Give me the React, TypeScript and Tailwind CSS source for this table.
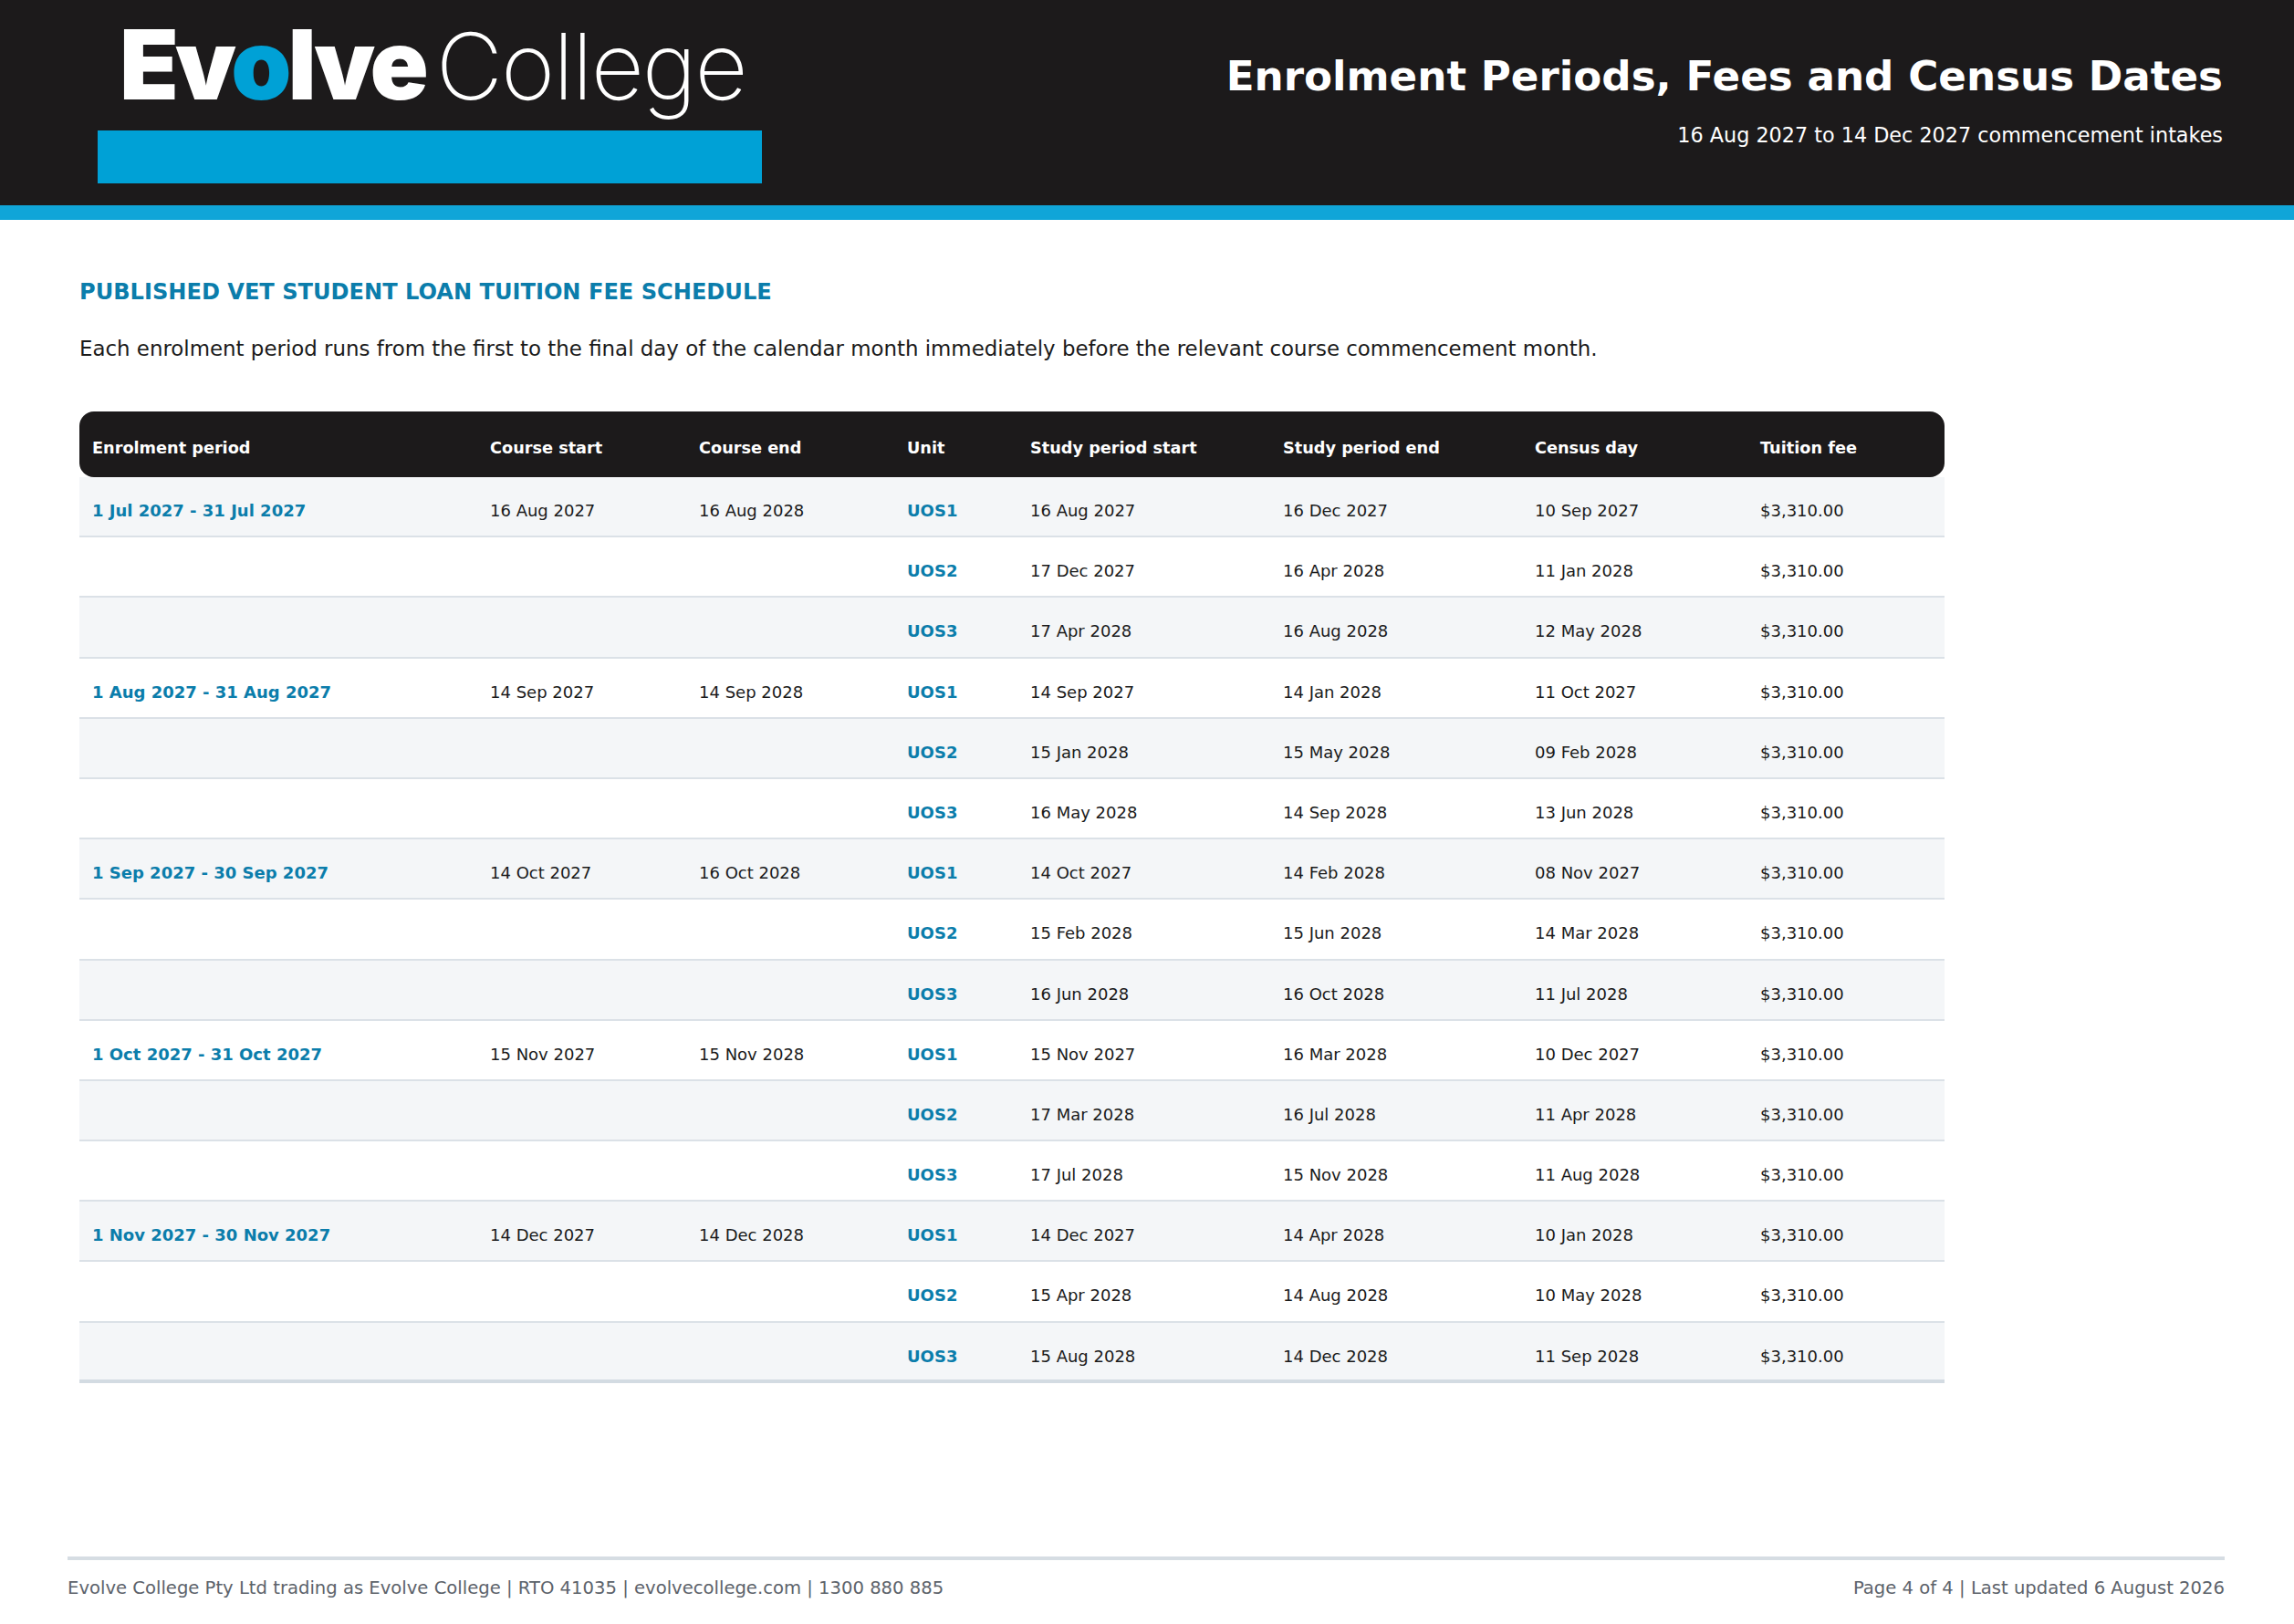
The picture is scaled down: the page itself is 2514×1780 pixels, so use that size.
type Unit = { unit: string; start: string; end: string; census: string };
type Period = { period: string; courseStart: string; courseEnd: string; units: Unit[] };

const periods: Period[] = [
  {
    period: "1 Jul 2027 - 31 Jul 2027",
    courseStart: "16 Aug 2027",
    courseEnd: "16 Aug 2028",
    units: [
      { unit: "UOS1", start: "16 Aug 2027", end: "16 Dec 2027", census: "10 Sep 2027" },
      { unit: "UOS2", start: "17 Dec 2027", end: "16 Apr 2028", census: "11 Jan 2028" },
      { unit: "UOS3", start: "17 Apr 2028", end: "16 Aug 2028", census: "12 May 2028" },
    ],
  },
  {
    period: "1 Aug 2027 - 31 Aug 2027",
    courseStart: "14 Sep 2027",
    courseEnd: "14 Sep 2028",
    units: [
      { unit: "UOS1", start: "14 Sep 2027", end: "14 Jan 2028", census: "11 Oct 2027" },
      { unit: "UOS2", start: "15 Jan 2028", end: "15 May 2028", census: "09 Feb 2028" },
      { unit: "UOS3", start: "16 May 2028", end: "14 Sep 2028", census: "13 Jun 2028" },
    ],
  },
  {
    period: "1 Sep 2027 - 30 Sep 2027",
    courseStart: "14 Oct 2027",
    courseEnd: "16 Oct 2028",
    units: [
      { unit: "UOS1", start: "14 Oct 2027", end: "14 Feb 2028", census: "08 Nov 2027" },
      { unit: "UOS2", start: "15 Feb 2028", end: "15 Jun 2028", census: "14 Mar 2028" },
      { unit: "UOS3", start: "16 Jun 2028", end: "16 Oct 2028", census: "11 Jul 2028" },
    ],
  },
  {
    period: "1 Oct 2027 - 31 Oct 2027",
    courseStart: "15 Nov 2027",
    courseEnd: "15 Nov 2028",
    units: [
      { unit: "UOS1", start: "15 Nov 2027", end: "16 Mar 2028", census: "10 Dec 2027" },
      { unit: "UOS2", start: "17 Mar 2028", end: "16 Jul 2028", census: "11 Apr 2028" },
      { unit: "UOS3", start: "17 Jul 2028", end: "15 Nov 2028", census: "11 Aug 2028" },
    ],
  },
  {
    period: "1 Nov 2027 - 30 Nov 2027",
    courseStart: "14 Dec 2027",
    courseEnd: "14 Dec 2028",
    units: [
      { unit: "UOS1", start: "14 Dec 2027", end: "14 Apr 2028", census: "10 Jan 2028" },
      { unit: "UOS2", start: "15 Apr 2028", end: "14 Aug 2028", census: "10 May 2028" },
      { unit: "UOS3", start: "15 Aug 2028", end: "14 Dec 2028", census: "11 Sep 2028" },
    ],
  },
];

const FEE = "$3,310.00";
const cols = "grid grid-cols-[436px_229px_228px_135px_277px_276px_247px_216px]";
const headings = [
  "Enrolment period",
  "Course start",
  "Course end",
  "Unit",
  "Study period start",
  "Study period end",
  "Census day",
  "Tuition fee",
];

const Logo = () => (
  <div className="flex flex-col w-[728px]">
    <div className="flex items-baseline pl-[24px] pt-[18px] leading-none text-white font-['Inter',sans-serif]">
      <span className="text-[106px] font-black tracking-[-4px] leading-none">
        Ev<span className="text-[#00a1d6]">o</span>lve
      </span>
      <span className="ml-[12px] text-[101px] font-extralight tracking-[-2px] leading-none">College</span>
    </div>
    <div className="mt-[19px] h-[58px] bg-[#00a1d6]" />
  </div>
);

const Header = () => (
  <header>
    <div className="h-[225px] bg-[#1c1a1b] flex justify-between pl-[107px] pr-[78px]">
      <Logo />
      <div className="flex flex-col items-end pt-[61px] text-white">
        <h1 className="text-[45.2px] font-bold leading-none">Enrolment Periods, Fees and Census Dates</h1>
        <p className="mt-[31px] text-[22.3px] leading-none">16 Aug 2027 to 14 Dec 2027 commencement intakes</p>
      </div>
    </div>
    <div className="h-[16px] bg-[#10a5d8]" />
  </header>
);

const FeeTable = () => {
  let i = 0;
  return (
    <div className="mt-[57px] w-[2044px]">
      <div className={`${cols} h-[72px] rounded-2xl bg-[#1c1a1b] text-white text-[17.7px] font-bold leading-none`}>
        {headings.map((h) => (
          <div key={h} className="flex items-center pl-[14px] pt-[10px]">
            {h}
          </div>
        ))}
      </div>
      {periods.map((p) =>
        p.units.map((u, j) => {
          const shaded = i % 2 === 0;
          const last = i === 14;
          i++;
          return (
            <div
              key={p.period + u.unit}
              className={`${cols} h-[66.2px] text-[18px] leading-none text-[#1a1a1a] ${
                shaded ? "bg-[#f4f6f8]" : "bg-white"
              } ${last ? "border-b-4 border-[#d3dbe2]" : "border-b-2 border-[#dbe1e7]"}`}
            >
              <div className="pl-[14px] pt-[28px] font-bold text-[#0b7dab]">{j === 0 ? p.period : ""}</div>
              <div className="pl-[14px] pt-[28px]">{j === 0 ? p.courseStart : ""}</div>
              <div className="pl-[14px] pt-[28px]">{j === 0 ? p.courseEnd : ""}</div>
              <div className="pl-[14px] pt-[28px] font-bold text-[#0b7dab]">{u.unit}</div>
              <div className="pl-[14px] pt-[28px]">{u.start}</div>
              <div className="pl-[14px] pt-[28px]">{u.end}</div>
              <div className="pl-[14px] pt-[28px]">{u.census}</div>
              <div className="pl-[14px] pt-[28px]">{FEE}</div>
            </div>
          );
        })
      )}
    </div>
  );
};

export default function App() {
  return (
    <div className="min-h-screen flex flex-col bg-white font-['DejaVu_Sans',sans-serif]">
      <Header />
      <main className="px-[87px] pt-[67px]">
        <h2 className="text-[24.1px] font-bold leading-none text-[#0b7dab]">PUBLISHED VET STUDENT LOAN TUITION FEE SCHEDULE</h2>
        <p className="mt-[39px] text-[22.9px] leading-none text-[#1a1a1a]">
          Each enrolment period runs from the first to the final day of the calendar month immediately before the
          relevant course commencement month.
        </p>
        <FeeTable />
      </main>
      <footer className="mt-auto mr-[76px] ml-[74px] border-t-4 border-[#d6dde3] pt-[21px] pb-[29px] flex justify-between text-[19.6px] leading-none text-[#5d636b]">
        <span>Evolve College Pty Ltd trading as Evolve College | RTO 41035 | evolvecollege.com | 1300 880 885</span>
        <span>Page 4 of 4 | Last updated 6 August 2026</span>
      </footer>
    </div>
  );
}
